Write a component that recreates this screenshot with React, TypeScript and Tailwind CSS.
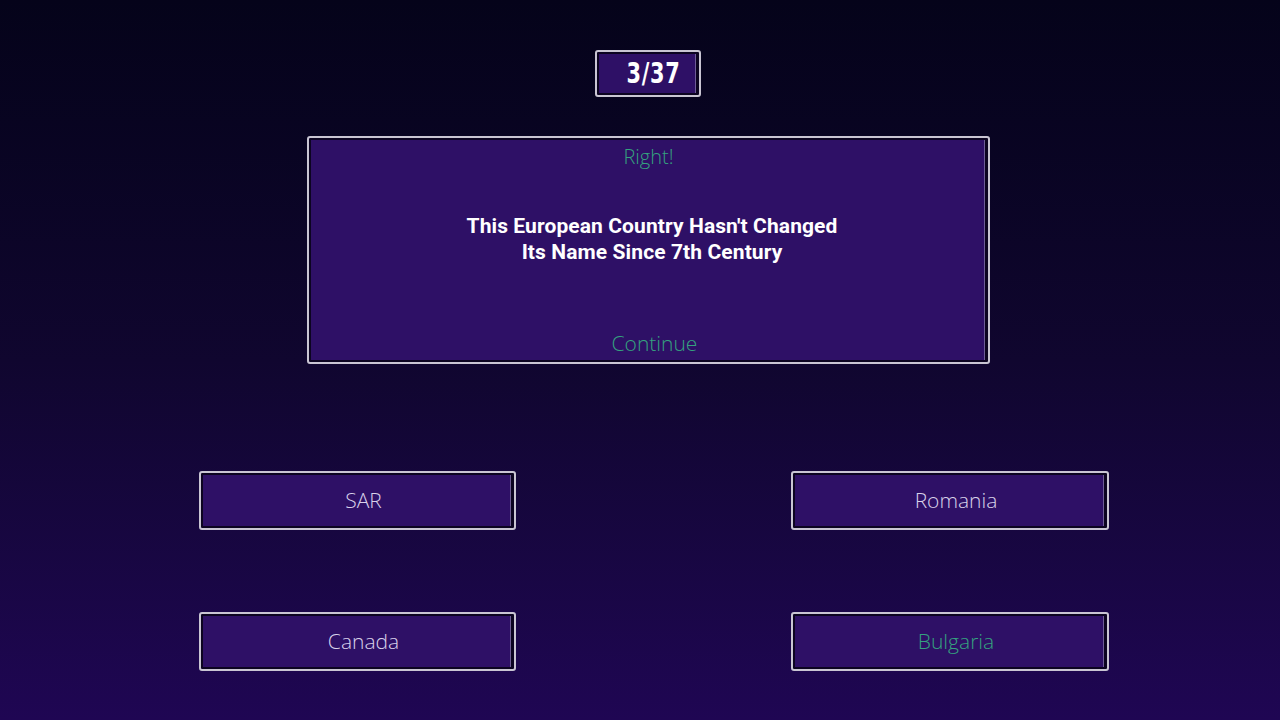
import React from "react";

const boxCls =
  "rounded-[3px] border-2 border-[#c9c5d3] bg-[#2e1066] shadow-[inset_0_0_0_2px_#0c0421,inset_-3px_0_0_0_#0c0421,inset_-4px_0_0_0_#6e5c96]";

const answers = [
  { label: "SAR", correct: false },
  { label: "Romania", correct: false },
  { label: "Canada", correct: false },
  { label: "Bulgaria", correct: true },
];

export default function App() {
  return (
    <div className="h-[720px] w-full overflow-hidden bg-gradient-to-b from-[#05031a] via-[#10062f] to-[#1f0653] font-['Open_Sans',sans-serif]">
      {/* progress counter */}
      <div
        className={`${boxCls} ml-[595px] mt-[50px] flex h-[47px] w-[106px] items-center justify-center pl-[12px]`}
      >
        <span className="inline-block scale-x-[0.72] font-['DejaVu_Sans',sans-serif] text-[29px] font-bold leading-none tracking-[1px] text-white">
          3/37
        </span>
      </div>

      {/* question card */}
      <div
        className={`${boxCls} ml-[307px] mt-[39px] flex h-[228px] w-[683px] flex-col items-center`}
      >
        <div className="mt-[7px] text-[20px] font-light leading-[24px] text-[#35a27f]">Right!</div>
        <div className="ml-[7px] mt-[44px] text-center font-['Roboto',sans-serif] text-[21px] font-bold leading-[26px] tracking-[0.1px] text-white">
          This European Country Hasn't Changed
          <br />
          Its Name Since 7th Century
        </div>
        <div className="ml-[12px] mt-[66px] text-[21px] font-light leading-[24px] text-[#35a27f]">
          Continue
        </div>
      </div>

      {/* answers */}
      <div className="ml-[199px] mt-[107px] grid w-[910px] grid-cols-[317px_318px] justify-between gap-y-[82px]">
        {answers.map((a) => (
          <div
            key={a.label}
            className={`${boxCls} flex h-[59px] items-center justify-center pl-[12px] text-[21px] font-light ${
              a.correct ? "text-[#35a27f]" : "text-[#d9d2ea]"
            }`}
          >
            {a.label}
          </div>
        ))}
      </div>
    </div>
  );
}
